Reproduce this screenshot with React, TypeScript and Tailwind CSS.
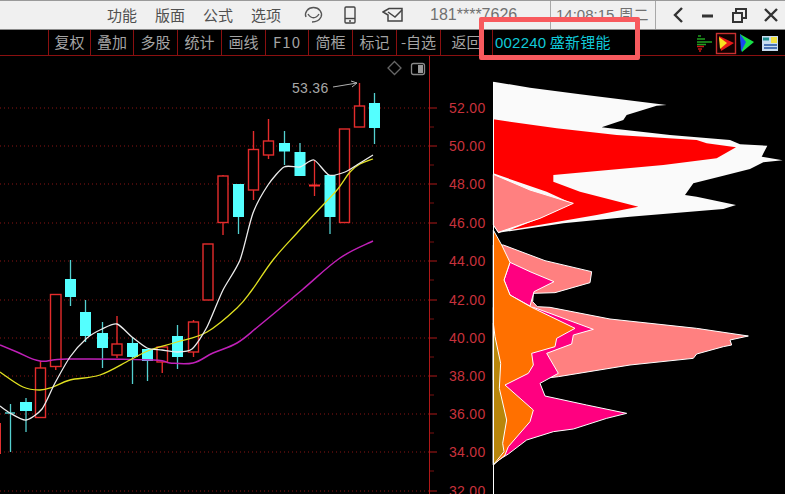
const TABS: [string, number][] = [
  ["", 49],
  ["复权", 42],
  ["叠加", 43],
  ["多股", 44],
  ["统计", 44],
  ["画线", 44],
  ["F10", 43],
  ["简框", 44],
  ["标记", 44],
  ["-自选", 44],
  ["返回", 52],
];

const CJK = "font-['Noto_Sans_CJK_SC','Liberation_Sans',sans-serif]";

type C = [number, number, number, number, number, number];
// left, right, bodyTop, bodyBottom, wickTop, wickBottom
const UP: C[] = [
  [35.5, 45.5, 368, 417.5, 361, 418],
  [50.5, 61, 294.5, 366.5, 294, 370],
  [112, 122, 344, 355, 316, 358],
  [157, 167.5, 347, 362, 346, 373],
  [188.5, 198.5, 322, 352, 320, 357],
  [203, 213, 244, 300, 244, 300],
  [218, 228, 176, 222.5, 175, 235],
  [248.5, 258.5, 149.5, 190, 131, 200],
  [263.5, 273.5, 141, 155, 119, 159],
  [339.5, 349.5, 129, 222.5, 129, 222.5],
  [354.5, 364.5, 106, 127, 83, 127],
];
const DOWN: C[] = [
  [20, 32, 402, 411, 398, 432],
  [65, 76, 279, 297, 260, 306],
  [80, 91, 312, 336, 300, 342],
  [97, 108, 333, 348, 322, 368],
  [127, 138, 343, 357, 337, 384],
  [142, 153, 349, 361, 349, 381],
  [172, 183, 336, 357, 325, 369],
  [233, 244, 184, 217, 184, 234],
  [279, 290, 143, 151.5, 131, 165],
  [294.5, 305.5, 152, 176, 143, 176],
  [324.5, 335.5, 175, 217, 175, 234],
  [369, 380, 103, 128, 93, 144],
];

type P = [number, number];
const WHITE: P[] = [[0,406],[10,413],[26,420],[42,409],[55,383],[70,357],[87,338],[102,329],[117,324],[132,337],[147,348],[162,350],[177,352],[192,349],[207,327],[223,290],[240,260],[253,213],[268,185],[284,167],[300,167],[314,160],[329,175],[345,172],[360,163],[373,155]];
const YELLOW: P[] = [[0,372],[23,387],[40,390],[53,387],[70,380],[100,375],[130,360],[150,350],[177,342],[207,332],[237,308],[252,290],[273,260],[297,233],[323,205],[337,190],[350,172],[360,164],[373,159]];
const PURPLE: P[] = [[0,345],[17,352],[40,361],[67,359],[153,360],[170,363],[193,363],[213,353],[237,343],[260,325],[302,290],[340,258],[373,241]];

// Rounds a data line through its points.
function smooth(pts: P[], k: number) {
  let d = `M${pts[0][0]} ${pts[0][1]}`;
  for (let i = 0; i < pts.length - 1; i++) {
    const p0 = pts[i - 1] ?? pts[i];
    const p1 = pts[i];
    const p2 = pts[i + 1];
    const p3 = pts[i + 2] ?? p2;
    const c1x = p1[0] + (p2[0] - p0[0]) * k;
    const c1y = p1[1] + (p2[1] - p0[1]) * k;
    const c2x = p2[0] - (p3[0] - p1[0]) * k;
    const c2y = p2[1] - (p3[1] - p1[1]) * k;
    d += ` C${c1x.toFixed(1)} ${c1y.toFixed(1)} ${c2x.toFixed(1)} ${c2y.toFixed(1)} ${p2[0]} ${p2[1]}`;
  }
  return d;
}

const GRID = [108, 146, 184, 223, 261, 300, 338, 376, 414, 452, 491];
const LABELS = ["52.00", "50.00", "48.00", "46.00", "44.00", "42.00", "40.00", "38.00", "36.00", "34.00", "32.00"];

const up = (pts: number[][]) => pts.map(([x, y]) => `${430 + x / 3},${75 + y / 3}`).join(" ");
const lo = (pts: number[][]) => pts.map(([x, y]) => `${430 + x / 3},${230 + y / 3}`).join(" ");

const P_WHITE = up([[190,20],[300,38],[450,58],[710,90],[680,92],[590,120],[580,135],[515,157],[540,160],[720,180],[900,195],[930,208],[1012,212],[995,245],[1058,256],[1000,262],[960,282],[880,302],[790,325],[765,360],[800,365],[918,390],[880,402],[600,425],[400,445],[215,472],[205,475],[190,450]]);
const P_RED = up([[190,133],[380,160],[560,180],[800,195],[830,205],[918,217],[860,250],[700,270],[370,300],[370,320],[450,350],[625,395],[500,420],[240,465],[330,430],[425,385],[350,350],[190,295]]);
const P_SALMON_UP = up([[190,298],[300,345],[430,385],[330,430],[205,472],[190,450]]);
const P_SALMON = lo([[220,45],[345,92],[485,125],[480,158],[375,188],[310,190],[308,215],[322,230],[360,232],[540,267],[800,295],[955,318],[900,330],[905,345],[880,350],[800,372],[790,385],[600,405],[385,440],[300,450],[190,450],[190,45]]);
const P_MAG_A = lo([[240,97],[300,125],[372,155],[312,185],[300,228],[240,195],[222,150]]);
const P_MAG_B = lo([[310,232],[360,250],[490,298],[430,315],[425,342],[350,370],[385,430],[330,460],[345,498],[470,525],[590,550],[530,565],[430,597],[370,605],[290,630],[235,672],[190,700],[190,232]]);
const P_ORANGE = lo([[190,0],[215,45],[240,97],[222,150],[240,195],[305,232],[435,295],[380,325],[375,350],[305,370],[310,405],[295,430],[225,465],[310,540],[300,575],[235,650],[225,675],[190,705]]);
const P_OLIVE = lo([[190,280],[195,320],[212,400],[208,475],[230,570],[218,640],[222,665],[190,705]]);

function Chart() {
  return (
    <svg width={785} height={494} viewBox="0 0 785 494" className="absolute left-0 top-0" style={{ fontFamily: "'Liberation Sans', sans-serif" }}>
      {GRID.map((y) => (
        <line key={y} x1={0} x2={430} y1={y} y2={y} stroke="#8a1414" strokeDasharray="1 3" />
      ))}
      <line x1={429.5} x2={429.5} y1={56} y2={494} stroke="#b01818" />
      {GRID.map((y, i) => (
        <g key={y}>
          <line x1={430} x2={437} y1={y} y2={y} stroke="#b01818" />
          <line x1={430} x2={434} y1={y + 19} y2={y + 19} stroke="#7a1010" />
          <text x={449} y={y + 5} fontSize={14} fill="#c8323c" letterSpacing={0.3}>{LABELS[i]}</text>
        </g>
      ))}

      {/* candlesticks */}
      <rect x={-2} y={423} width={3} height={31} fill="#e03030" />
      <line x1={10.5} x2={10.5} y1={404} y2={452} stroke="#54d0d0" strokeWidth={1.3} />
      <line x1={5} x2={15} y1={413} y2={413} stroke="#54e8e8" strokeWidth={1.3} />
      {UP.map(([l, r, t, b, wt, wb], i) => (
        <g key={i} stroke="#e42c2c" strokeWidth={1.4} fill="#000">
          <line x1={(l + r) / 2} x2={(l + r) / 2} y1={wt} y2={wb} />
          <rect x={l} y={t} width={r - l} height={b - t} />
        </g>
      ))}
      {DOWN.map(([l, r, t, b, wt, wb], i) => (
        <g key={i}>
          <line x1={(l + r) / 2} x2={(l + r) / 2} y1={wt} y2={wb} stroke="#54d0d0" strokeWidth={1.3} />
          <rect x={l} y={t} width={r - l} height={b - t} fill="#54ffff" />
        </g>
      ))}
      <line x1={314.5} x2={314.5} y1={160} y2={196} stroke="#e42c2c" strokeWidth={1.3} />
      <line x1={309} x2={320} y1={185.5} y2={185.5} stroke="#ff3030" strokeWidth={2} />

      <path d={smooth(PURPLE, 0.18)} fill="none" stroke="#c020b8" strokeWidth={1.5} />
      <path d={smooth(YELLOW, 0.18)} fill="none" stroke="#e0e020" strokeWidth={1.3} />
      <path d={smooth(WHITE, 0.12)} fill="none" stroke="#ececec" strokeWidth={1.3} />

      <text x={292} y={93} fontSize={14} fill="#a8a8a8" letterSpacing={0.3}>53.36</text>
      <path d="M333 87 L357 83 M351 81 L357 83 L352 87" fill="none" stroke="#b0b0b0" />
      <path d="M394.5 61.5 L401 68 L394.5 74.5 L388 68 Z" fill="none" stroke="#666" strokeWidth={1.3} />
      <rect x={411.5} y={63.5} width={13} height={11} rx={2} fill="none" stroke="#888" strokeWidth={1.3} />
      <rect x={418} y={65} width={5} height={8} fill="#999" />

      {/* volume profile */}
      <g stroke="#fff" strokeWidth={1} strokeLinejoin="bevel">
        <polygon points={P_WHITE} fill="#fafafa" stroke="none" />
        <polygon points={P_RED} fill="#ff0000" stroke="none" />
        <polygon points={P_SALMON_UP} fill="#ff8080" />
        <polygon points={P_SALMON} fill="#ff8080" />
        <polygon points={P_MAG_A} fill="#ff0080" />
        <polygon points={P_MAG_B} fill="#ff0080" />
        <polygon points={P_ORANGE} fill="#ff7000" />
        <polygon points={P_OLIVE} fill="#b8860b" />
      </g>
      <line x1={493.5} x2={493.5} y1={82} y2={494} stroke="#fff" />
    </svg>
  );
}

function TopIcons() {
  return (
    <>
      <svg width={22} height={20} viewBox="0 0 22 20" className="ml-[22px] shrink-0" fill="none" stroke="#555" strokeWidth={1.4}>
        <path d="M3 12 A8 7 0 1 1 18 12 C16 16 13 17 9 17" />
        <path d="M5 9 C8 14 13 14 16 9" />
      </svg>
      <svg width={12} height={18} viewBox="0 0 12 18" className="ml-[19px] shrink-0" fill="none" stroke="#444" strokeWidth={1.4}>
        <rect x={1} y={1} width={10} height={16} rx={1} />
        <line x1={1} x2={11} y1={12.5} y2={12.5} />
        <line x1={5} x2={7} y1={15} y2={15} />
      </svg>
      <svg width={22} height={16} viewBox="0 0 22 16" className="ml-[26px] shrink-0" fill="none" stroke="#444" strokeWidth={1.5}>
        <path d="M1 5 L7 1.5 H20 V14 H6 V8 Z" />
        <path d="M6 5 L13 10 L20 3" />
      </svg>
    </>
  );
}

export default function App() {
  return (
    <div className={`relative w-[785px] h-[494px] overflow-hidden bg-black ${CJK}`}>
      <Chart />
      <div className="relative flex h-[30px] items-center whitespace-nowrap border-t border-t-[#9a9a9a] border-b border-b-[#8a8a8a] bg-[#f0f0f0] text-[15px] text-[#505050]">
        <div className="ml-[107px] flex w-[174px] shrink-0 gap-[18px]">
          <span>功能</span>
          <span>版面</span>
          <span>公式</span>
          <span>选项</span>
        </div>
        <TopIcons />
        <span className="ml-[26px] w-[120px] shrink-0 font-['Liberation_Sans',sans-serif] text-[16px] text-[#707070]">181****7626</span>
        <div className="flex h-full w-[106px] shrink-0 items-center border-x border-x-[#a8a8a8] pl-[5px] font-['Liberation_Sans','Noto_Sans_CJK_SC',sans-serif] text-[15px] text-[#707070]">14:08:15 周二</div>
        <div className="flex flex-1 items-center pl-[13px]">
          <svg width={116} height={18} viewBox="0 0 116 18" fill="none" stroke="#333" strokeWidth={2.4}>
            <path d="M13 2 L6 9 L13 16" />
            <path d="M33 10 H44" strokeWidth={3} />
            <rect x={64} y={7} width={9} height={9} strokeWidth={2} />
            <path d="M67 7 V3 H77 V12 H73" strokeWidth={2} />
            <path d="M96 3 L108 15 M108 3 L96 15" />
          </svg>
        </div>
      </div>
      <div className="relative flex h-[26px] items-stretch border-b border-b-[#8a1010] bg-black text-[15px] text-[#a4a4a4]">
        {TABS.map(([t, w], i) => (
          <div
            key={i}
            style={{ width: w }}
            className="flex shrink-0 items-center justify-center whitespace-nowrap border-r border-r-[#8a1010]"
          >
            <span className={t === "F10" ? "tracking-[1px]" : ""}>{t}</span>
          </div>
        ))}
        <div className="flex flex-1 items-center bg-black pl-[2px]">
          <span className="text-[15px] tracking-[0.2px] text-[#10c8d8]">
            <span className="font-['Liberation_Sans',sans-serif]">002240</span> 盛新锂能
          </span>
        </div>
        <svg width={90} height={24} viewBox="0 0 90 24" className="absolute right-[3px] top-[1px]">
          <path d="M6 5 H9 M5 8 H13 M5 11 H20 M5 13.5 H14" stroke="#20a020" strokeWidth={1.6} />
          <path d="M5 15.5 H12 M6 18 H10 M7 20 H9" stroke="#c81818" strokeWidth={1.6} />
          <rect x={24.5} y={2.5} width={19} height={20} fill="#100000" stroke="#c83030" strokeWidth={1.4} />
          <path d="M27 5 L42 12 L29 20 Z" fill="#e81818" />
          <path d="M27 6 L35 12 L28 18 Z" fill="#f8e020" />
          <path d="M48 3 L62 11 L50 21 Z" fill="#18e048" />
          <path d="M48 3 L54 11 L49 21 Z" fill="#1848f0" />
          <rect x={70} y={5} width={16} height={15} fill="#c8dcf0" />
          <rect x={79} y={6} width={6} height={6} fill="#f0e040" />
          <path d="M71 8 H77" stroke="#209090" strokeWidth={3} />
          <path d="M72 14 H85 M72 17 H85" stroke="#2050a0" strokeWidth={1.4} />
        </svg>
      </div>
      <div className="absolute left-[479px] top-[17px] h-[43px] w-[161px] rounded-[2px] border-[5px] border-[#f85a5e]" />
    </div>
  );
}
